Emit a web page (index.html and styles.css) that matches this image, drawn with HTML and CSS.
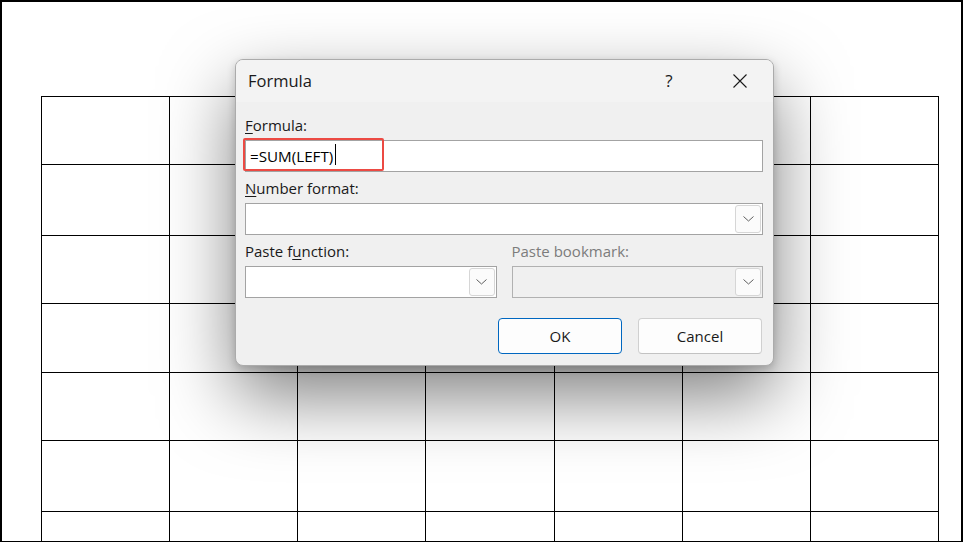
FILE: index.html
```html
<!DOCTYPE html>
<html lang="en">
<head>
<meta charset="utf-8">
<title>Formula</title>
<link rel="stylesheet" href="styles.css">
</head>
<body>
<div class="page">
  <div class="doc-table">
    <div class="cell"></div><div class="cell"></div><div class="cell"></div><div class="cell"></div><div class="cell"></div><div class="cell"></div><div class="cell"></div>
    <div class="cell"></div><div class="cell"></div><div class="cell"></div><div class="cell"></div><div class="cell"></div><div class="cell"></div><div class="cell"></div>
    <div class="cell"></div><div class="cell"></div><div class="cell"></div><div class="cell"></div><div class="cell"></div><div class="cell"></div><div class="cell"></div>
    <div class="cell"></div><div class="cell"></div><div class="cell"></div><div class="cell"></div><div class="cell"></div><div class="cell"></div><div class="cell"></div>
    <div class="cell"></div><div class="cell"></div><div class="cell"></div><div class="cell"></div><div class="cell"></div><div class="cell"></div><div class="cell"></div>
    <div class="cell"></div><div class="cell"></div><div class="cell"></div><div class="cell"></div><div class="cell"></div><div class="cell"></div><div class="cell"></div>
    <div class="cell"></div><div class="cell"></div><div class="cell"></div><div class="cell"></div><div class="cell"></div><div class="cell"></div><div class="cell"></div>
  </div>
</div>

<div class="dialog">
  <div class="titlebar">
    <span class="title">Formula</span>
    <span class="help">?</span>
    <span class="close">
      <svg width="16" height="16" viewBox="0 0 16 16"><path d="M1.5 1.5 L14.5 14.5 M14.5 1.5 L1.5 14.5" stroke="#1a1a1a" stroke-width="1.1" fill="none"/></svg>
    </span>
  </div>
  <div class="body">
    <div class="group">
      <div class="label"><u>F</u>ormula:</div>
      <div class="field formula-field">
        <span class="value">=SUM(LEFT)</span><span class="caret"></span>
        <span class="highlight"></span>
      </div>
    </div>
    <div class="group">
      <div class="label"><u>N</u>umber format:</div>
      <div class="field">
        <span class="drop"><svg width="11" height="6" viewBox="0 0 11 6"><path d="M0.5 0.5 L5.5 5 L10.5 0.5" stroke="#5f5f5f" stroke-width="1" fill="none"/></svg></span>
      </div>
    </div>
    <div class="pair">
      <div class="group">
        <div class="label">Paste f<u>u</u>nction:</div>
        <div class="field">
          <span class="drop"><svg width="11" height="6" viewBox="0 0 11 6"><path d="M0.5 0.5 L5.5 5 L10.5 0.5" stroke="#5f5f5f" stroke-width="1" fill="none"/></svg></span>
        </div>
      </div>
      <div class="group">
        <div class="label disabled">Paste bookmark:</div>
        <div class="field field-disabled">
          <span class="drop"><svg width="11" height="6" viewBox="0 0 11 6"><path d="M0.5 0.5 L5.5 5 L10.5 0.5" stroke="#5f5f5f" stroke-width="1" fill="none"/></svg></span>
        </div>
      </div>
    </div>
    <div class="buttons">
      <button class="btn btn-primary">OK</button>
      <button class="btn">Cancel</button>
    </div>
  </div>
</div>
</body>
</html>
```

FILE: styles.css
```css
* { box-sizing: border-box; }
html, body { margin: 0; padding: 0; }
body {
  width: 963px;
  height: 542px;
  overflow: hidden;
  position: relative;
  background: #fff;
  font-family: "Open Sans", "Noto Sans", sans-serif;
  color: #1a1a1a;
}

.page {
  width: 963px;
  height: 542px;
  border: 2px solid #000;
  border-bottom-width: 1px;
  padding: 94px 0 0 39px;
  overflow: hidden;
  background: #fff;
}

.doc-table {
  display: grid;
  grid-template-columns: 128px 128px 128px 129px 128px 128px 128px;
  grid-template-rows: 68px 71px 68px 69px 68px 71px 70px;
  width: max-content;
  border-left: 1px solid #000;
  border-top: 1px solid #000;
}
.cell {
  border-right: 1px solid #000;
  border-bottom: 1px solid #000;
}

.dialog {
  position: absolute;
  left: 235px;
  top: 59px;
  width: 539px;
  background: #f0f0f0;
  border: 1px solid #ababab;
  border-radius: 8px;
  box-shadow: 0 30px 72px rgba(0, 0, 0, 0.5), 0 3px 8px rgba(0, 0, 0, 0.18);
  overflow: hidden;
}

.titlebar {
  height: 42px;
  background: #f3f3f3;
  display: flex;
  align-items: center;
  padding: 0 25px 0 12px;
}
.title {
  font-size: 16.5px;
  line-height: 20px;
  color: #1a1a1a;
}
.help {
  margin-left: auto;
  width: 20px;
  text-align: center;
  font-size: 17px;
  line-height: 20px;
  color: #1a1a1a;
  margin-right: 53px;
}
.close {
  width: 16px;
  height: 16px;
  display: flex;
}

.body {
  padding: 13px 10px 11px 9px;
}
.group {
  margin-bottom: 6px;
}
.label {
  font-size: 15px;
  line-height: 20px;
  margin-bottom: 5px;
  color: #1a1a1a;
}
.label u { text-decoration-thickness: 1px; text-underline-offset: 2px; }
.label.disabled { color: #7c7c7c; }

.field {
  position: relative;
  height: 32px;
  border: 1px solid #a3a3a3;
  background: #fff;
  display: flex;
  align-items: center;
}
.field-disabled {
  background: #f0f0f0;
  border-color: #b1b1b1;
}
.formula-field {
  padding-left: 4px;
}
.value {
  font-size: 15.2px;
  line-height: 30px;
  color: #000;
}
.caret {
  width: 1px;
  height: 21px;
  background: #000;
  margin-left: 2px;
  margin-top: -4px;
}
.highlight {
  position: absolute;
  left: -3px;
  top: -3px;
  width: 141px;
  height: 33px;
  border: 2px solid #ec4a43;
  border-radius: 2px;
}

.drop {
  margin-left: auto;
  margin-right: 1px;
  width: 26px;
  height: 28px;
  border: 1px solid #d6d6d6;
  border-radius: 3px;
  background: #fbfbfb;
  display: flex;
  align-items: center;
  justify-content: center;
}

.pair {
  display: grid;
  grid-template-columns: 1fr 1fr;
  column-gap: 15px;
}
.pair .group { margin-bottom: 0; }

.buttons {
  display: flex;
  justify-content: flex-end;
  gap: 16px;
  margin-top: 20px;
  padding-right: 1px;
}
.btn {
  width: 124px;
  height: 36px;
  border: 1px solid #d0d0d0;
  border-bottom-color: #c2c2c2;
  border-radius: 4px;
  background: #fdfdfd;
  font-family: "Open Sans", "Noto Sans", sans-serif;
  font-size: 15px;
  color: #1a1a1a;
  padding: 0;
}
.btn-primary {
  border: 1px solid #0067c0;
}
```
